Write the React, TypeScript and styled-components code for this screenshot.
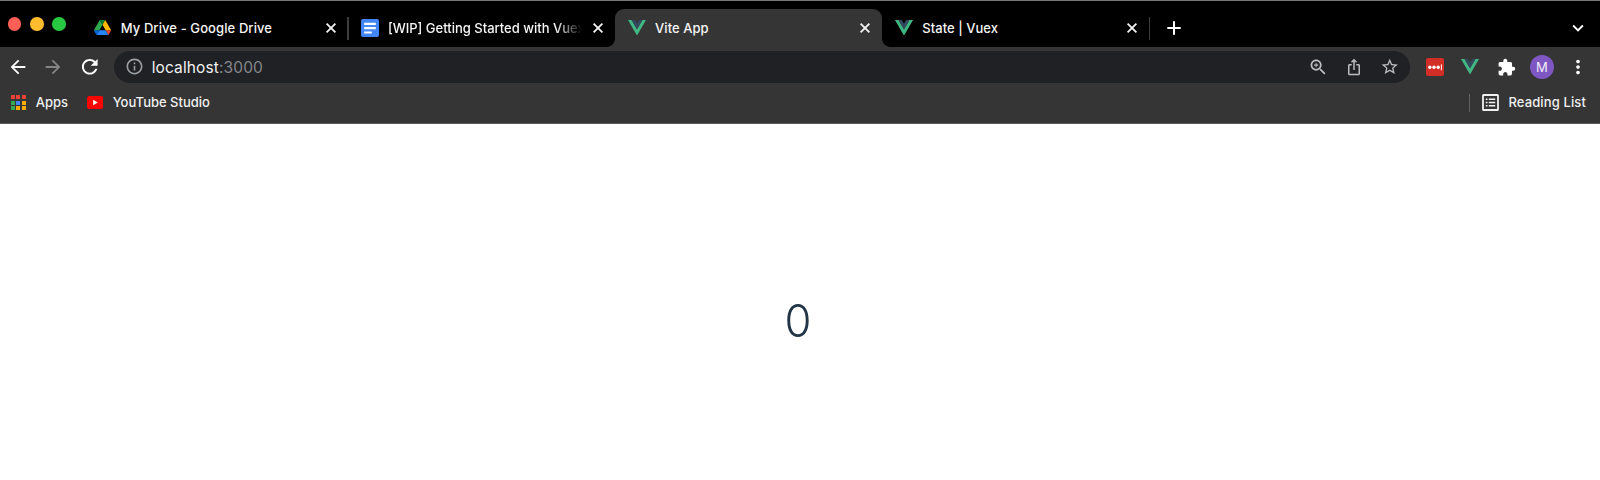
import React from "react";
import styled, { createGlobalStyle, css } from "styled-components";

const GlobalStyle = createGlobalStyle`
  * { box-sizing: border-box; }
  body { margin: 0; background: #fff; font-family: Inter, "Liberation Sans", sans-serif; }
`;

const Browser = styled.div`
  display: flex;
  flex-direction: column;
  width: 1600px;
  height: 480px;
  overflow: hidden;
`;

const TabStrip = styled.div`
  display: flex;
  height: 47px;
  padding-right: 11.5px;
  background: #000;
  border-top: 1px solid #757575;
`;

const WindowControls = styled.div`
  display: flex;
  gap: 8.6px;
  width: 80.7px;
  padding: 16.2px 0 0 7.7px;
`;

const ControlDot = styled.span<{ $color: string }>`
  width: 13.7px;
  height: 13.7px;
  border-radius: 50%;
  background: ${(p) => p.$color};
`;

const TabItem = styled.div<{ $active?: boolean; $divider?: boolean }>`
  position: relative;
  display: flex;
  align-items: center;
  width: 267.2px;
  height: 38px;
  margin-top: 8px;
  padding: 0 11px 1px 13px;
  ${(p) =>
    p.$active &&
    css`
      background: #353535;
      border-radius: 9px 9px 0 0;
      &::before,
      &::after {
        content: "";
        position: absolute;
        bottom: 0;
        width: 8px;
        height: 8px;
      }
      &::before {
        left: -8px;
        background: radial-gradient(circle at 0 0, transparent 7.5px, #353535 8px);
      }
      &::after {
        right: -8px;
        background: radial-gradient(circle at 100% 0, transparent 7.5px, #353535 8px);
      }
    `}
  ${(p) =>
    p.$divider &&
    css`
      &::after {
        content: "";
        position: absolute;
        right: -1px;
        top: 8px;
        width: 1.6px;
        height: 23px;
        background: #3d3d3d;
      }
    `}
`;

const Favicon = styled.span`
  display: flex;
  width: 18px;
  flex: none;
`;

const TabTitle = styled.span<{ $spacing?: number; $faded?: boolean }>`
  flex: 1;
  margin: 0 8px 0 9px;
  overflow: hidden;
  color: #f5f5f5;
  font-size: 13px;
  font-weight: 500;
  line-height: 18px;
  letter-spacing: ${(p) => p.$spacing ?? 0}px;
  white-space: nowrap;
  ${(p) => p.$faded && css`mask-image: linear-gradient(90deg, #000 168px, transparent 194px);`}
`;

const StripButton = styled.button<{ $left?: number }>`
  display: flex;
  padding: 0;
  border: 0;
  background: none;
  align-self: center;
  margin: 8px 0 0 ${(p) => p.$left ?? 0}px;
`;

const TabClose = styled(StripButton)`
  margin-top: 0;
`;

const Push = styled.span`
  flex: 1;
`;

const Toolbar = styled.div`
  display: flex;
  align-items: center;
  height: 40px;
  background: #353535;
`;

const NavButtons = styled.div`
  display: flex;
  align-items: center;
  width: 114px;
  padding-left: 6.5px;
  gap: 13.7px;
`;

const AddressBar = styled.div`
  display: flex;
  align-items: center;
  width: 1296px;
  height: 31.4px;
  padding: 0 10.5px 0 10.7px;
  border-radius: 16px;
  background: #202124;
`;

const Address = styled.span`
  flex: 1;
  margin: 2px 0 0 8px;
  color: #f1f1f2;
  font-size: 15.5px;
  line-height: 20px;
  letter-spacing: 0.12px;
`;

const Port = styled.span`
  color: #85878b;
`;

const AddressActions = styled.div`
  display: flex;
  align-items: center;
  gap: 16.7px;
`;

const Extensions = styled.div`
  display: flex;
  align-items: center;
  gap: 11.1px;
  flex: 1;
  padding-left: 12.5px;
`;

const ExtensionSlot = styled.span`
  display: flex;
  justify-content: center;
  width: 24.6px;
`;

const PasswordBadge = styled.span`
  display: flex;
  width: 18.5px;
  height: 18.5px;
  border-radius: 2px;
  background: #d32d27;
`;

const Avatar = styled.span`
  display: flex;
  align-items: center;
  justify-content: center;
  width: 24.6px;
  height: 24.6px;
  border-radius: 50%;
  background: #7e57c2;
  color: #f4effa;
  font-size: 13px;
`;

const BookmarkBar = styled.div`
  display: flex;
  align-items: center;
  height: 37px;
  padding: 0 14px 5px 10.5px;
  background: #353535;
  border-bottom: 1.5px solid #5a5a5a;
`;

const BookmarkLabel = styled.span<{ $left: number; $right?: number; $spacing?: number }>`
  margin: 0 ${(p) => p.$right ?? 0}px 1.5px ${(p) => p.$left}px;
  color: #f0f0f0;
  font-size: 13px;
  font-weight: 500;
  line-height: 18px;
  letter-spacing: ${(p) => p.$spacing ?? 0}px;
  white-space: nowrap;
`;

const BarDivider = styled.span`
  width: 1.3px;
  height: 18px;
  margin-right: 12px;
  background: #626262;
`;

const AppsGrid = styled.span`
  display: grid;
  grid-template-columns: repeat(3, 4px);
  grid-auto-rows: 4px;
  gap: 1.5px;
`;

const AppCell = styled.span<{ $color: string }>`
  background: ${(p) => p.$color};
`;

const Page = styled.main`
  display: flex;
  flex: 1;
  justify-content: center;
  padding: 170px 4px 0 0;
  background: #fff;
`;

const Counter = styled.span`
  color: #213547;
  font-size: 45px;
  font-weight: 300;
  line-height: 54px;
  transform: scaleX(0.97);
`;

const Glyph = ({ d, size, color = "#fff" }: { d: string; size: number; color?: string }) => (
  <svg width={size} height={size} viewBox="0 0 24 24" fill={color}>
    <path d={d} />
  </svg>
);

const VueLogo = () => (
  <svg width="18" height="15.6" viewBox="0 0 256 221">
    <path fill="#41b883" d="M0 0l128 220.8L256 0h-51.2L128 132.5 50.6 0z" />
    <path fill="#35495e" d="M50.6 0L128 133.1 204.8 0h-47.4L128 51.2 97.3 0z" />
  </svg>
);

const DriveLogo = () => (
  <svg width="17" height="15.2" viewBox="0 0 87.3 78">
    <path fill="#0066da" d="m6.6 66.85 3.85 6.65c.8 1.4 1.95 2.5 3.3 3.3l13.75-23.8h-27.5c0 1.55.4 3.1 1.2 4.5z" />
    <path fill="#2da94f" d="m43.65 25-13.75-23.8c-1.35.8-2.5 1.9-3.3 3.3l-25.4 44a9.06 9.06 0 0 0-1.2 4.5h27.5z" />
    <path fill="#ea4335" d="m73.55 76.8c1.35-.8 2.5-1.9 3.3-3.3l1.6-2.75 7.65-13.25c.8-1.4 1.2-2.95 1.2-4.5h-27.5l5.85 11.5z" />
    <path fill="#00832d" d="m43.65 25 13.75-23.8c-1.35-.8-2.9-1.2-4.5-1.2h-18.5c-1.6 0-3.15.45-4.5 1.2z" />
    <path fill="#2684fc" d="m59.8 53h-32.3l-13.75 23.8c1.35.8 2.9 1.2 4.5 1.2h50.8c1.6 0 3.15-.45 4.5-1.2z" />
    <path fill="#ffba00" d="m73.4 26.5-12.7-22c-.8-1.4-1.95-2.5-3.3-3.3l-13.75 23.8 16.15 28h27.45c0-1.55-.4-3.1-1.2-4.5z" />
  </svg>
);

const DocsLogo = () => (
  <svg width="18" height="18" viewBox="0 0 18 18">
    <rect width="18" height="18" rx="2" fill="#4285f4" />
    <path d="M3.2 4.9h11.6M3.2 9.2h11.6M3.2 13.5h7.6" stroke="#fff" strokeWidth="2.2" />
  </svg>
);

const CloseIcon = () => (
  <svg width="12" height="12" viewBox="0 0 12 12">
    <path d="M1.6 1.6l8.8 8.8M10.4 1.6l-8.8 8.8" stroke="#f4f4f4" strokeWidth="1.8" />
  </svg>
);

const paths = {
  back: "M20 11H7.83l5.59-5.59L12 4l-8 8 8 8 1.41-1.41L7.83 13H20v-2z",
  forward: "M12 4l-1.41 1.41L16.17 11H4v2h12.17l-5.58 5.59L12 20l8-8z",
  reload:
    "M17.65 6.35C16.2 4.9 14.21 4 12 4c-4.42 0-7.99 3.58-7.99 8s3.57 8 7.99 8c3.73 0 6.84-2.55 7.73-6h-2.08c-.82 2.33-3.04 4-5.65 4-3.31 0-6-2.69-6-6s2.69-6 6-6c1.66 0 3.14.69 4.22 1.78L13 11h7V4l-2.35 2.35z",
  info: "M11 7h2v2h-2zm0 4h2v6h-2zm1-9C6.48 2 2 6.48 2 12s4.48 10 10 10 10-4.48 10-10S17.52 2 12 2zm0 18c-4.41 0-8-3.59-8-8s3.59-8 8-8 8 3.59 8 8-3.59 8-8 8z",
  zoom: "M15.5 14h-.79l-.28-.27C15.41 12.59 16 11.11 16 9.5 16 5.91 13.09 3 9.5 3S3 5.91 3 9.5 5.91 16 9.5 16c1.61 0 3.09-.59 4.23-1.57l.27.28v.79l5 4.99L20.49 19l-4.99-5zm-6 0C7.01 14 5 11.99 5 9.5S7.01 5 9.5 5 14 7.01 14 9.5 11.99 14 9.5 14zm.6-7H8.9v1.9H7v1.2h1.9V12h1.2v-1.9H12V8.9h-1.9z",
  share:
    "M16 5l-1.42 1.42-1.59-1.59V16h-1.98V4.83L9.42 6.42 8 5l4-4 4 4zm4 5v11c0 1.1-.9 2-2 2H6c-1.11 0-2-.9-2-2V10c0-1.11.89-2 2-2h3v2H6v11h12V10h-3V8h3c1.1 0 2 .89 2 2z",
  star: "M22 9.24l-7.19-.62L12 2 9.19 8.63 2 9.24l5.46 4.73L5.82 21 12 17.27 18.18 21l-1.63-7.03L22 9.24zM12 15.4l-3.76 2.27 1-4.28-3.32-2.88 4.38-.38L12 6.1l1.71 4.04 4.38.38-3.32 2.88 1 4.28L12 15.4z",
  extension:
    "M20.5 11H19V7c0-1.1-.9-2-2-2h-4V3.5C13 2.12 11.88 1 10.5 1S8 2.12 8 3.5V5H4c-1.1 0-1.99.9-1.99 2v3.8H3.5c1.49 0 2.7 1.21 2.7 2.7s-1.21 2.7-2.7 2.7H2V20c0 1.1.9 2 2 2h3.8v-1.5c0-1.49 1.21-2.7 2.7-2.7 1.49 0 2.7 1.21 2.7 2.7V22H17c1.1 0 2-.9 2-2v-4h1.5c1.38 0 2.5-1.12 2.5-2.5S21.88 11 20.5 11z",
  more: "M12 8c1.1 0 2-.9 2-2s-.9-2-2-2-2 .9-2 2 .9 2 2 2zm0 2c-1.1 0-2 .9-2 2s.9 2 2 2 2-.9 2-2-.9-2-2-2zm0 6c-1.1 0-2 .9-2 2s.9 2 2 2 2-.9 2-2-.9-2-2-2z",
  chevron: "M16.59 8.59L12 13.17 7.41 8.59 6 10l6 6 6-6z",
};

const tabs = [
  { title: "My Drive - Google Drive", icon: <DriveLogo />, divider: true, spacing: 0.1 },
  { title: "[WIP] Getting Started with Vuex", icon: <DocsLogo />, faded: true },
  { title: "Vite App", icon: <VueLogo />, active: true, spacing: 0.05 },
  { title: "State | Vuex", icon: <VueLogo />, divider: true, spacing: 0.04 },
];

const appColors = ["#ea4335", "#ea4335", "#ea4335", "#34a853", "#4285f4", "#f9ab00", "#34a853", "#f9ab00", "#f9ab00"];

export default function App() {
  return (
    <Browser>
      <GlobalStyle />
      <TabStrip>
        <WindowControls>
          <ControlDot $color="#ff5f57" />
          <ControlDot $color="#febc2e" />
          <ControlDot $color="#28c840" />
        </WindowControls>
        {tabs.map((t) => (
          <TabItem key={t.title} $active={t.active} $divider={t.divider}>
            <Favicon>{t.icon}</Favicon>
            <TabTitle $faded={t.faded} $spacing={t.spacing}>
              {t.title}
            </TabTitle>
            <TabClose aria-label="Close tab">
              <CloseIcon />
            </TabClose>
          </TabItem>
        ))}
        <StripButton $left={17.8} aria-label="New tab">
          <svg width="14" height="14" viewBox="0 0 14 14">
            <path d="M7 .3v13.4M.3 7h13.4" stroke="#fff" strokeWidth="2" />
          </svg>
        </StripButton>
        <Push />
        <StripButton aria-label="Search tabs">
          <Glyph d={paths.chevron} size={22} />
        </StripButton>
      </TabStrip>
      <Toolbar>
        <NavButtons>
          <Glyph d={paths.back} size={22} />
          <Glyph d={paths.forward} size={22} color="#858585" />
          <Glyph d={paths.reload} size={23.5} />
        </NavButtons>
        <AddressBar>
          <Glyph d={paths.info} size={19} color="#9aa0a6" />
          <Address>
            localhost<Port>:3000</Port>
          </Address>
          <AddressActions>
            <Glyph d={paths.zoom} size={20.5} color="#bcbdbf" />
            <Glyph d={paths.share} size={18} color="#bcbdbf" />
            <Glyph d={paths.star} size={19.5} color="#bcbdbf" />
          </AddressActions>
        </AddressBar>
        <Extensions>
          <ExtensionSlot>
            <PasswordBadge>
              <svg width="18.5" height="18.5" viewBox="0 0 18.5 18.5" fill="#fff">
                <circle cx="3.8" cy="9.3" r="1.7" />
                <circle cx="8" cy="9.3" r="1.7" />
                <circle cx="12.2" cy="9.3" r="1.7" />
                <rect x="14.9" y="6.4" width="1" height="5.8" />
              </svg>
            </PasswordBadge>
          </ExtensionSlot>
          <ExtensionSlot>
            <VueLogo />
          </ExtensionSlot>
          <ExtensionSlot>
            <Glyph d={paths.extension} size={19} />
          </ExtensionSlot>
          <ExtensionSlot>
            <Avatar>M</Avatar>
          </ExtensionSlot>
          <ExtensionSlot>
            <Glyph d={paths.more} size={22} />
          </ExtensionSlot>
        </Extensions>
      </Toolbar>
      <BookmarkBar>
        <AppsGrid>
          {appColors.map((c, i) => (
            <AppCell key={i} $color={c} />
          ))}
        </AppsGrid>
        <BookmarkLabel $left={10.3} $right={18.7}>Apps</BookmarkLabel>
        <svg width="16.4" height="13" viewBox="0 0 16.4 13">
          <rect width="16.4" height="13" rx="2.6" fill="#f00" />
          <path d="M6.2 3.8v5.4l4.6-2.7z" fill="#fff" />
        </svg>
        <BookmarkLabel $left={9.5}>YouTube Studio</BookmarkLabel>
        <Push />
        <BarDivider />
        <svg width="17" height="17" viewBox="0 0 17 17">
          <rect x="1" y="1" width="15" height="15" rx=".6" fill="none" stroke="#f1f1f1" strokeWidth="1.8" />
          <path d="M3.8 5.2h1.7M3.8 8.5h1.7M3.8 11.8h1.7M6.8 5.2h6.4M6.8 8.5h6.4M6.8 11.8h6.4" stroke="#f1f1f1" strokeWidth="1.6" />
        </svg>
        <BookmarkLabel $left={9} $spacing={0.12}>Reading List</BookmarkLabel>
      </BookmarkBar>
      <Page>
        <Counter>0</Counter>
      </Page>
    </Browser>
  );
}
